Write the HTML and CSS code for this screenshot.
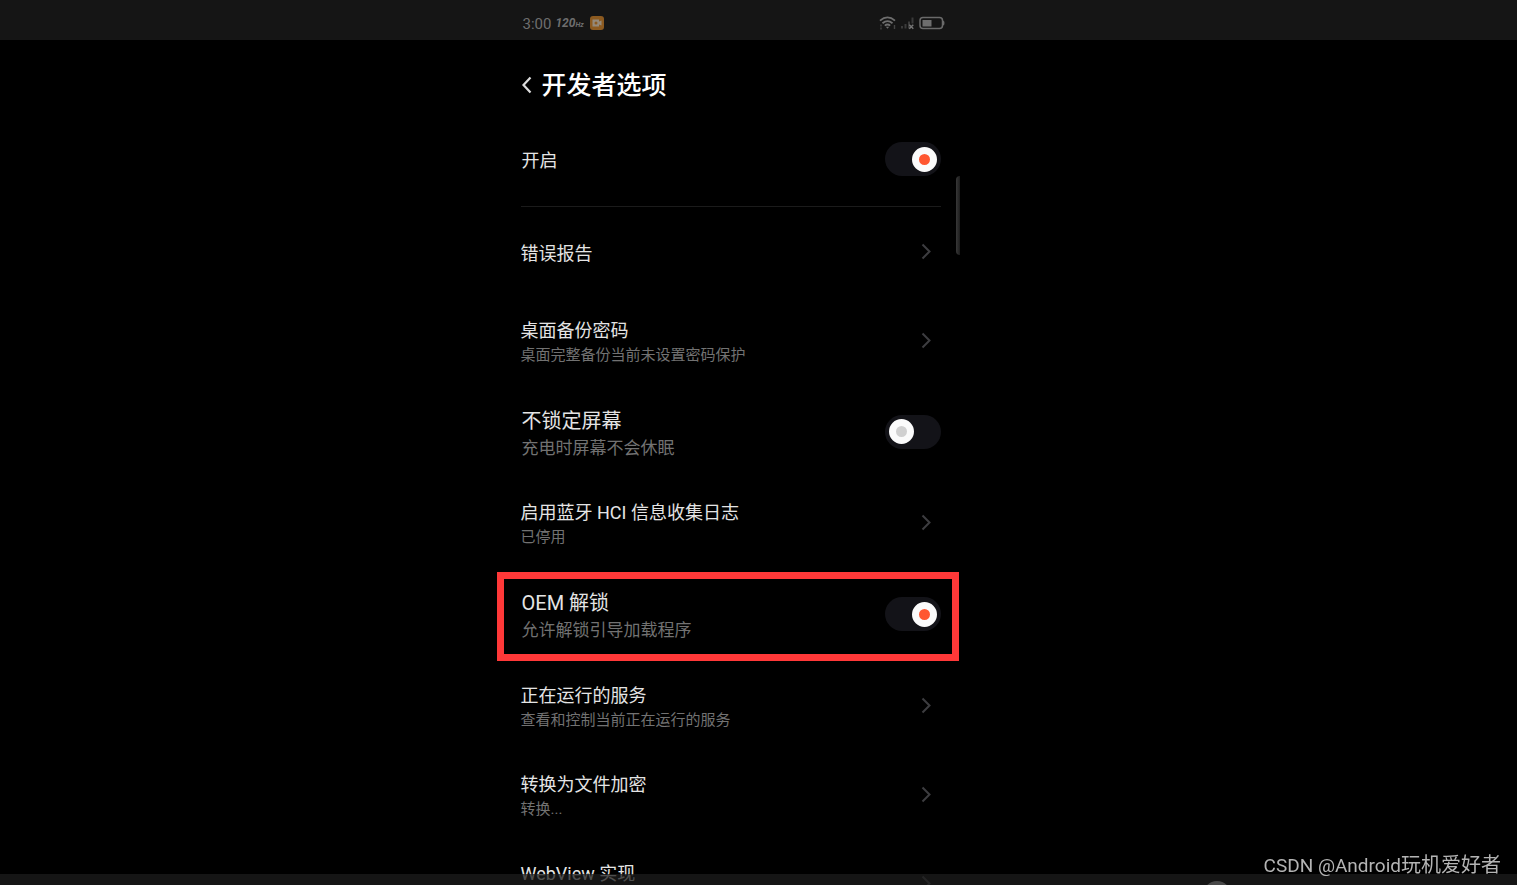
FILE: index.html
```html
<!DOCTYPE html>
<html lang="zh-CN">
<head>
    <meta charset="UTF-8">
    <meta name="viewport" content="width=device-width, initial-scale=1.0">
    <title>开发者选项</title>
    <link rel="stylesheet" href="styles.css">
</head>
<body>
    <header class="status-bar">
        <div class="status-inner">
            <span class="clock">3:00</span>
            <span class="refresh-rate">120<small>Hz</small></span>
            <svg class="record-icon" width="14" height="14" viewBox="0 0 14 14">
                <rect width="14" height="14" rx="3" fill="#8c5a20"/>
                <path d="M2.500 3.500h6.500v2L11.500 4.500v5L9 8.500v2H2.500z" fill="#94897a"/>
                <circle cx="6" cy="7" r="1.500" fill="#8c5a20"/>
            </svg>
            <div class="status-right">
                <svg width="17" height="14" viewBox="0 0 17 14" fill="none" stroke="#6e6e6e" stroke-width="1.800">
                    <path d="M1 4.600Q8.500-1.800 16 4.600M3.500 7.200Q8.500 3 13.500 7.200M5.800 9.600Q8.500 7.400 11.200 9.600"/>
                    <path d="M6.800 10.800h3.400l-1.700 2z" fill="#6e6e6e" stroke="none"/>
                    <path d="M2 8.500v2M2 11.500v2M15.500 9v4" stroke="#444" stroke-width="1.400"/>
                </svg>
                <svg width="15" height="14" viewBox="0 0 15 14">
                    <path d="M1 10h2v2.500H1zM4.500 8h2v4.500h-2zM8 5.500h2v7H8zM11.500 1.500h2v6h-2z" fill="#3a3a3a"/>
                    <path d="M9.300 8.700l4 4M13.300 8.700l-4 4" stroke="#777" stroke-width="1.400"/>
                </svg>
                <svg width="26" height="14" viewBox="0 0 26 14">
                    <rect x="1" y="1.500" width="22.500" height="11" rx="3" fill="none" stroke="#6a6a6a" stroke-width="1.500"/>
                    <rect x="3.500" y="4" width="9" height="6.500" fill="#6e6e6e"/>
                    <path d="M24 4.500q1.500 0 1.500 2.500T24 9.500z" fill="#6a6a6a"/>
                </svg>
            </div>
        </div>
    </header>

    <div class="stage">
        <main class="screen">
            <div class="title-bar">
                <button class="back-btn" type="button" aria-label="返回">
                    <svg width="12" height="18" viewBox="0 0 12 18" fill="none" stroke="#dcdcdc" stroke-width="2.200">
                        <path d="M9.500 1.500L2.500 9l7 7.500"/>
                    </svg>
                </button>
                <h1>开发者选项</h1>
            </div>

            <label class="row row-master" for="dev-on">
                <span class="text">
                    <span class="name">开启</span>
                </span>
                <input class="switch" type="checkbox" id="dev-on" checked>
            </label>

            <hr>

            <a class="row" href="#bug-report">
                <span class="text">
                    <span class="name">错误报告</span>
                </span>
                <svg class="arrow" viewBox="0 0 10 17"><path d="M1.500 1.500L8.500 8.500l-7 7"/></svg>
            </a>
            <a class="row" href="#backup-password">
                <span class="text">
                    <span class="name">桌面备份密码</span>
                    <span class="desc">桌面完整备份当前未设置密码保护</span>
                </span>
                <svg class="arrow" viewBox="0 0 10 17"><path d="M1.500 1.500L8.500 8.500l-7 7"/></svg>
            </a>
            <label class="row row-switch" for="stay-awake">
                <span class="text">
                    <span class="name">不锁定屏幕</span>
                    <span class="desc">充电时屏幕不会休眠</span>
                </span>
                <input class="switch" type="checkbox" id="stay-awake">
            </label>
            <a class="row" href="#bluetooth-hci">
                <span class="text">
                    <span class="name">启用蓝牙 HCI 信息收集日志</span>
                    <span class="desc">已停用</span>
                </span>
                <svg class="arrow" viewBox="0 0 10 17"><path d="M1.500 1.500L8.500 8.500l-7 7"/></svg>
            </a>
            <label class="row row-switch highlight" for="oem-unlock">
                <span class="text">
                    <span class="name">OEM 解锁</span>
                    <span class="desc">允许解锁引导加载程序</span>
                </span>
                <input class="switch" type="checkbox" id="oem-unlock" checked>
            </label>
            <a class="row" href="#running-services">
                <span class="text">
                    <span class="name">正在运行的服务</span>
                    <span class="desc">查看和控制当前正在运行的服务</span>
                </span>
                <svg class="arrow" viewBox="0 0 10 17"><path d="M1.500 1.500L8.500 8.500l-7 7"/></svg>
            </a>
            <a class="row" href="#file-encryption">
                <span class="text">
                    <span class="name">转换为文件加密</span>
                    <span class="desc">转换...</span>
                </span>
                <svg class="arrow" viewBox="0 0 10 17"><path d="M1.500 1.500L8.500 8.500l-7 7"/></svg>
            </a>
            <a class="row" href="#webview">
                <span class="text">
                    <span class="name">WebView 实现</span>
                    <span class="desc">&nbsp;</span>
                </span>
                <svg class="arrow" viewBox="0 0 10 17"><path d="M1.500 1.500L8.500 8.500l-7 7"/></svg>
            </a>

            <div class="scroll-thumb"></div>
        </main>
    </div>

    <div class="bottom-bar"><span class="knob"></span></div>
    <div class="watermark"><span class="latin">CSDN @Android</span>玩机爱好者</div>
</body>
</html>
```

FILE: styles.css
```css
* {
    box-sizing: border-box;
}

body {
    margin: 0;
    height: 100vh;
    overflow: hidden;
    background: #000;
    color: #e4e4e4;
    font-family: Roboto, "Noto Sans CJK SC", sans-serif;
}

/* the phone column sits a little left of centre */
.status-bar,
.stage {
    display: flex;
    justify-content: center;
    padding-right: 62px;
}

.status-bar {
    height: 40px;
    padding-top: 6px;
    background: #151515;
}

.status-inner {
    display: flex;
    align-items: center;
    width: 462px;
    height: 34px;
    padding: 0 14px 0 26px;
    color: #6e6e6e;
}

.clock {
    padding-top: 1px;
    font-size: 15px;
}

.refresh-rate {
    margin-left: 4px;
    font-size: 12px;
    font-weight: 700;
    font-style: italic;
}

.refresh-rate small {
    font-size: 7px;
}

.record-icon {
    margin-left: 6px;
}

.status-right {
    display: flex;
    gap: 4px;
    margin-left: auto;
}

.screen {
    position: relative;
    width: 462px;
}

.title-bar {
    display: flex;
    align-items: center;
    height: 90px;
    padding-left: 24px;
}

.back-btn {
    display: flex;
    padding: 0;
    border: 0;
    background: none;
    cursor: pointer;
}

h1 {
    margin: 0;
    padding: 2px 0 0 9px;
    color: #fff;
    font-size: 25px;
    font-weight: 500;
    line-height: 32px;
}

hr {
    height: 1px;
    margin: 0 18px 0 24px;
    border: 0;
    background: #1b1b1b;
}

.row {
    display: flex;
    align-items: center;
    justify-content: space-between;
    height: 89px;
    padding: 0 18px 0 24px;
    color: inherit;
    text-decoration: none;
    cursor: pointer;
}

.row-master {
    height: 76px;
    padding-bottom: 18px;
    padding-left: 25px;
}

.text {
    padding-top: 4px;
}

.name,
.desc {
    display: block;
}

.name {
    font-size: 18px;
    line-height: 24px;
}

.desc {
    color: #727272;
    font-size: 15px;
    line-height: 24px;
}

.row-switch {
    height: 93px;
    padding-left: 25px;
}

.row-switch .name {
    font-size: 20px;
    line-height: 28px;
}

.row-switch .desc {
    font-size: 17px;
    line-height: 26px;
}

.highlight {
    height: 89px;
    margin-top: 5px;
    padding-bottom: 5px;
    outline: 7px solid #ff3838;
    outline-offset: -7px;
}

.arrow {
    width: 10px;
    height: 17px;
    margin-right: 10px;
    fill: none;
    stroke: #3d3d40;
    stroke-width: 2;
}

.switch {
    display: flex;
    align-items: center;
    appearance: none;
    width: 56px;
    height: 34px;
    margin: 0;
    padding: 0 4px;
    border-radius: 17px;
    background: #131318;
    cursor: pointer;
}

.switch::before {
    content: "";
    box-sizing: border-box;
    width: 25px;
    height: 25px;
    border: 7px solid #fbfbfb;
    border-radius: 50%;
    background: #d0d0d0;
}

.switch:checked {
    justify-content: flex-end;
}

.switch:checked::before {
    background: #ff5630;
}

.scroll-thumb {
    position: absolute;
    top: 136px;
    right: -1px;
    width: 4px;
    height: 79px;
    border-radius: 4px 0 0 4px;
    background: linear-gradient(to right, #383838, #1c1c1c);
}

.bottom-bar {
    position: fixed;
    right: 0;
    bottom: 0;
    left: 0;
    height: 11px;
    overflow: hidden;
    background: rgba(28, 28, 28, 0.75);
}

.knob {
    position: absolute;
    top: 7px;
    right: 286px;
    width: 28px;
    height: 28px;
    border-radius: 50%;
    background: #484848;
}

.watermark {
    position: fixed;
    right: 16px;
    bottom: 4px;
    color: #b4b4b4;
    font-size: 20px;
    line-height: 30px;
}

.latin {
    font-size: 19px;
}
```
